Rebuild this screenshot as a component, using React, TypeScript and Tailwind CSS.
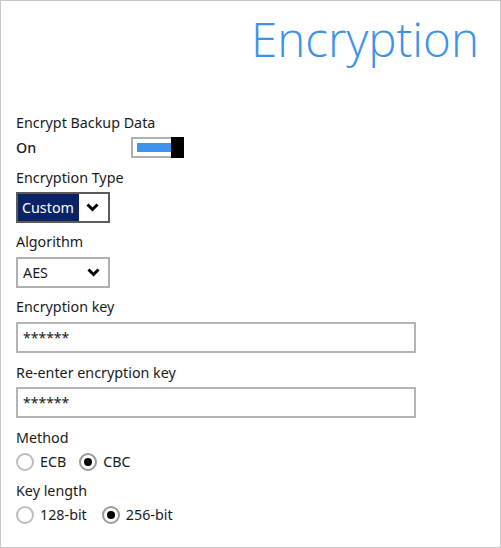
const Chevron = () => (
    <svg width="13" height="9" viewBox="0 0 13 9" className="block">
        <polyline points="1.5,1.5 6.5,6.5 11.5,1.5" fill="none" stroke="#000" strokeWidth="3" />
    </svg>
)

const Radio = ({ checked, label }: { checked?: boolean; label: string }) => (
    <div className="flex items-center gap-[6px]">
        <div className={"w-[18px] h-[18px] rounded-full border-2 flex items-center justify-center " + (checked ? "border-[#9a9a9a]" : "border-[#bdbdbd]")}>
            {checked && <div className="w-[8px] h-[8px] rounded-full bg-black" />}
        </div>
        <span>{label}</span>
    </div>
)

const Label = ({ children, className = "" }: { children: React.ReactNode; className?: string }) => (
    <div className={"h-[20px] leading-[20px] " + className}>{children}</div>
)

export default function App() {
    return (
        <div className="w-[501px] h-[548px] border border-[#c8c8c8] bg-white text-[14.3px] text-[#1a1a1a] overflow-hidden" style={{ fontFamily: '"Noto Sans", "Open Sans", sans-serif' }}>
            <div className="flex justify-end pr-[21px] pt-[10px]">
                <h1 className="text-[47.5px] leading-[56px] font-light text-[#3b93ec]" style={{ fontFamily: '"Open Sans", "Noto Sans", sans-serif' }}>Encryption</h1>
            </div>
            <div className="pl-[15px] pt-[46px]">
                <Label>Encrypt Backup Data</Label>
                <div className="flex items-center mt-[4px] h-[21px]">
                    <span className="w-[115px] font-medium">On</span>
                    <div className="flex h-[21px]">
                        <div className="w-[40px] h-[21px] border-2 border-r-0 border-[#b0b0b0] pl-[4px] py-[4px]">
                            <div className="w-full h-full bg-[#3d94ea]" />
                        </div>
                        <div className="w-[13px] h-[21px] bg-black" />
                    </div>
                </div>
                <Label className="mt-[10px]">Encryption Type</Label>
                <div className="mt-[4px] w-[94px] h-[31px] border-2 border-[#5a5a5a] flex">
                    <div className="w-[61px] bg-[#0c2266] text-white flex items-center pl-[4px]">Custom</div>
                    <div className="flex-1 flex items-center justify-center pr-[2px]"><Chevron /></div>
                </div>
                <Label className="mt-[9px]">Algorithm</Label>
                <div className="mt-[5px] w-[94px] h-[31px] border-2 border-[#b0b0b0] flex items-center justify-between pl-[5px] pr-[8px]">
                    <span>AES</span>
                    <Chevron />
                </div>
                <Label className="mt-[9px]">Encryption key</Label>
                <div className="mt-[5px] w-[400px] h-[31px] border-2 border-[#b4b4b4] flex items-center pl-[5px] text-[14px]">******</div>
                <Label className="mt-[10px]">Re-enter encryption key</Label>
                <div className="mt-[4px] w-[400px] h-[31px] border-2 border-[#b4b4b4] flex items-center pl-[5px] text-[14px]">******</div>
                <Label className="mt-[10px]">Method</Label>
                <div className="mt-[4px] flex items-center gap-[13px] h-[20px]">
                    <Radio label="ECB" />
                    <Radio checked label="CBC" />
                </div>
                <Label className="mt-[9px]">Key length</Label>
                <div className="mt-[4px] flex items-center gap-[15px] h-[20px]">
                    <Radio label="128-bit" />
                    <Radio checked label="256-bit" />
                </div>
            </div>
        </div>
    )
}
